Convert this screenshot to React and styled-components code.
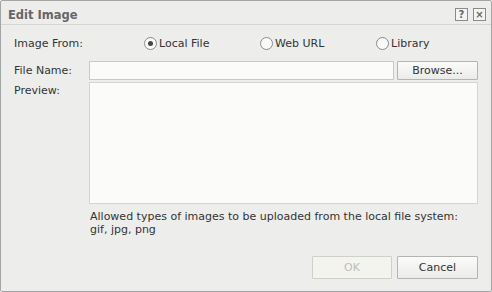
import styled, { createGlobalStyle } from "styled-components";

const Global = createGlobalStyle`
  html, body {
    margin: 0;
    padding: 0;
    background: #ffffff;
  }
  * {
    box-sizing: border-box;
  }
`;

const Dialog = styled.div`
  width: 492px;
  height: 292px;
  background: #edeeec;
  border: 1px solid #a4a4a4;
  border-radius: 2px;
  display: flex;
  flex-direction: column;
  font-family: "DejaVu Sans", Verdana, sans-serif;
  font-size: 11px;
  color: #333;
`;

const TitleBar = styled.div`
  height: 24px;
  border-bottom: 1px solid #d6d6d4;
  display: flex;
  align-items: center;
  justify-content: space-between;
  padding: 4px 5px 0 7px;
  flex-shrink: 0;
`;

const Title = styled.div`
  font-weight: bold;
  font-size: 11.5px;
  color: #666;
`;

const Tools = styled.div`
  display: flex;
  gap: 5px;
`;

const ToolBtn = styled.div`
  width: 13px;
  height: 13px;
  border: 1px solid #8a8a8a;
  background: #f4f4f2;
  display: flex;
  align-items: center;
  justify-content: center;
  color: #666;
  font-size: 10px;
  font-weight: bold;
  line-height: 1;
`;

const Body = styled.div`
  flex: 1;
  padding: 6px 13px 12px 13px;
  display: flex;
  flex-direction: column;
`;

const Row = styled.div`
  display: grid;
  grid-template-columns: 75px 1fr;
  align-items: ${(p) => (p.top ? "start" : "center")};
  min-height: ${(p) => p.h || 20}px;
  margin-bottom: ${(p) => p.mb || 0}px;
`;

const Label = styled.div`
  padding-top: ${(p) => p.pt || 0}px;
`;

const Radios = styled.div`
  display: grid;
  grid-template-columns: 55px 116px 116px 1fr;
  align-items: center;
  height: 24px;
`;

const Radio = styled.label`
  display: flex;
  align-items: center;
  gap: 2px;
  grid-column: ${(p) => p.col};
`;

const Circle = styled.span`
  width: 13px;
  height: 13px;
  border-radius: 50%;
  border: 1px solid #8a8a8a;
  background: #fbfbf9;
  display: flex;
  align-items: center;
  justify-content: center;
  &::after {
    content: "";
    display: ${(p) => (p.checked ? "block" : "none")};
    width: 5px;
    height: 5px;
    border-radius: 50%;
    background: #444;
  }
`;

const FileLine = styled.div`
  display: flex;
  gap: 3px;
`;

const Input = styled.div`
  flex: 1;
  height: 19px;
  background: #fbfcf9;
  border: 1px solid #c9c9c7;
`;

const Button = styled.div`
  width: ${(p) => p.w || 81}px;
  height: ${(p) => p.h || 19}px;
  border: 1px solid ${(p) => (p.disabled ? "#cfcfcc" : "#b4b4b2")};
  border-radius: 1px;
  background: ${(p) =>
    p.disabled ? "#f3f4ee" : "linear-gradient(#fbfbfa, #ebebea)"};
  color: ${(p) => (p.disabled ? "#bdbdbb" : "#333")};
  display: flex;
  align-items: center;
  justify-content: center;
`;

const Preview = styled.div`
  height: 122px;
  background: #fbfcf9;
  border: 1px solid #d4d4d2;
`;

const Note = styled.div`
  margin-left: 76px;
  margin-top: 6px;
  line-height: 13px;
`;

const Footer = styled.div`
  margin-top: auto;
  display: flex;
  justify-content: flex-end;
  gap: 5px;
`;

export default function App() {
  return (
    <>
      <Global />
      <Dialog>
        <TitleBar>
          <Title>Edit Image</Title>
          <Tools>
            <ToolBtn>?</ToolBtn>
            <ToolBtn>×</ToolBtn>
          </Tools>
        </TitleBar>
        <Body>
          <Row h={24} mb={6}>
            <Label>Image From:</Label>
            <Radios>
              <Radio col={2}>
                <Circle checked />
                Local File
              </Radio>
              <Radio col={3}>
                <Circle />
                Web URL
              </Radio>
              <Radio col={4}>
                <Circle />
                Library
              </Radio>
            </Radios>
          </Row>
          <Row h={19} mb={2}>
            <Label>File Name:</Label>
            <FileLine>
              <Input />
              <Button>Browse...</Button>
            </FileLine>
          </Row>
          <Row top>
            <Label pt={2}>Preview:</Label>
            <Preview />
          </Row>
          <Note>
            Allowed types of images to be uploaded from the local file system:
            <br />
            gif, jpg, png
          </Note>
          <Footer>
            <Button disabled w={80} h={23}>
              OK
            </Button>
            <Button w={81} h={23}>
              Cancel
            </Button>
          </Footer>
        </Body>
      </Dialog>
    </>
  );
}
